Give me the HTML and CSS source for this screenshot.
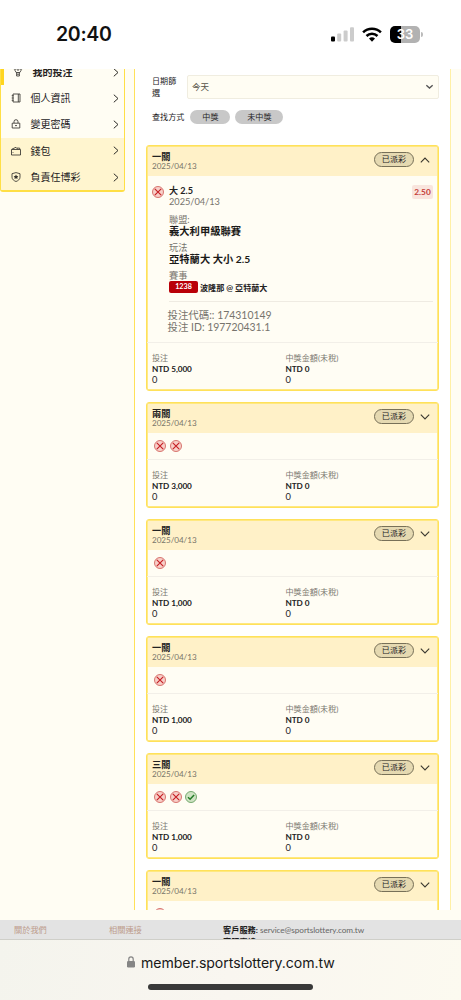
FILE: index.html
```html
<!DOCTYPE html>
<html lang="zh-Hant">
<head>
<meta charset="utf-8">
<meta name="viewport" content="width=device-width">
<title>我的投注</title>
<link rel="stylesheet" href="styles.css">
</head>
<body>
<svg class="defs" width="0" height="0">
  <symbol id="lose" viewBox="0 0 12 12"><circle cx="6" cy="6" r="5.5" fill="#f8cfc8" stroke="#d36862" stroke-width=".9"/><path d="M2.800 2.800l6.400 6.400M9.200 2.800L2.800 9.200" stroke="#c51f24" stroke-width="1.15" fill="none"/></symbol>
  <symbol id="win" viewBox="0 0 12 12"><circle cx="6" cy="6" r="5.5" fill="#cfe3c3" stroke="#69a263" stroke-width=".9"/><path d="M3 6.2l2.1 2 4-4.3" stroke="#237b26" stroke-width="1.5" fill="none"/></symbol>
  <symbol id="down" viewBox="0 0 10 6"><path d="M.8.7L5 5 9.2.7" fill="none" stroke="#3b382f" stroke-width="1.1"/></symbol>
  <symbol id="up" viewBox="0 0 10 6"><path d="M.8 5.3L5 1l4.200 4.300" fill="none" stroke="#3b382f" stroke-width="1.1"/></symbol>
  <symbol id="right" viewBox="0 0 6 9"><path d="M.8.7L5 4.500.8 8.300" fill="none" stroke="#2b2a26" stroke-width="1"/></symbol>
</svg>
<header class="status">
  <span class="clock">20:40</span>
  <svg class="signal" viewBox="0 0 24 15"><rect x="0" y="9.500" width="4" height="5" rx="1"/><g fill="#ccc"><rect x="6.200" y="6.500" width="4" height="8" rx="1"/><rect x="12.600" y="3.500" width="4" height="11" rx="1"/><rect x="19" y="0.300" width="4" height="14.200" rx="1"/></g></svg>
  <svg class="wifi" viewBox="0 0 20 15"><g fill="none" stroke="#000" stroke-width="2.500"><path d="M1.100 5.400a12.600 12.600 0 0 1 17.800 0"/><path d="M4.500 9a7.800 7.800 0 0 1 11 0"/></g><path d="M10 14.700l-3-3.100a4.300 4.300 0 0 1 6 0z"/></svg>
  <div class="battery"><span>33</span></div><i class="cap"></i>
</header>
<div class="page">
  <div class="content">
    <nav class="side">
      <a class="item current"><svg class="ico" viewBox="0 0 10 10"><path d="M2 .5h6v3L6.800 5.500H3.200L2 3.500zM.8 1.800h8.400M3.600 5.500V9h2.800V5.500M4 7.200h2M4 3h2"/></svg><b>我的投注</b><svg class="go"><use href="#right"/></svg></a>
      <a class="item"><svg class="ico" viewBox="0 0 10 10"><path d="M2 1h7v8H2zM7.300 1v8M.7 2.700h2M.7 5h2M.7 7.300h2"/></svg><span>個人資訊</span><svg class="go"><use href="#right"/></svg></a>
      <a class="item"><svg class="ico" viewBox="0 0 10 10"><path d="M1.200 4.200h7.600V9H1.200zM3 4V2.700a2 2 0 0 1 4 0V4M4 6.600h2"/></svg><span>變更密碼</span><svg class="go"><use href="#right"/></svg></a>
      <a class="item tinted"><svg class="ico" viewBox="0 0 10 10"><path d="M.5 3.500h9V9h-9zM.8 3.200L5 1.300 6.600 3.200M6 2.100h2.700v1.200M2 6v.8"/></svg><span>錢包</span><svg class="go"><use href="#right"/></svg></a>
      <a class="item tinted last"><svg class="ico" viewBox="0 0 10 10"><path d="M5 .6L9 1.700v3.500C9 7.400 7 8.800 5 9.500 3 8.800 1 7.400 1 5.200V1.700z"/><path d="M5 2.500l.8 1.500 1.500.2-1 1.200.2 1.600L5 6.300 3.500 7l.2-1.600-1-1.200L4.200 4z" class="solid"/></svg><span>負責任博彩</span><svg class="go"><use href="#right"/></svg></a>
    </nav>
    <main class="panel">
      <div class="filter"><label>日期篩<br>選</label><div class="select"><span>今天</span><svg viewBox="0 0 10 6"><path d="M1.500 1L5 4.200 8.500 1" fill="none" stroke="#555" stroke-width="1.500"/></svg></div></div>
      <div class="modes"><span>查找方式</span><em class="w1">中獎</em><em class="w2">未中獎</em></div>
      <section class="card open">
        <div class="head"><div><h3>一關</h3><time>2025/04/13</time></div><em>已派彩</em><svg class="arrow"><use href="#up"/></svg></div>
        <div class="detail">
          <svg class="mark"><use href="#lose"/></svg>
          <div class="info">
            <div class="pick"><strong>大 2.5</strong><time>2025/04/13</time></div>
            <div class="pair"><span>聯盟:</span><strong>義大利甲級聯賽</strong></div>
            <div class="pair"><span>玩法</span><strong>亞特蘭大 大小 2.5</strong></div>
            <div class="event"><span>賽事</span><div class="match"><b class="code">1238</b><b class="teams">波隆那 @ 亞特蘭大</b></div></div>
            <div class="ids"><span>投注代碼:: 174310149</span><span>投注 ID: 197720431.1</span></div>
          </div>
          <b class="odds">2.50</b>
        </div>
        <div class="sums"><div><small>投注</small><b>NTD 5,000</b><span>0</span></div><div><small>中獎金額(未稅)</small><b>NTD 0</b><span>0</span></div></div>
      </section>
      <section class="card">
        <div class="head"><div><h3>兩關</h3><time>2025/04/13</time></div><em>已派彩</em><svg class="arrow"><use href="#down"/></svg></div>
        <div class="marks"><svg class="mark"><use href="#lose"/></svg><svg class="mark"><use href="#lose"/></svg></div>
        <div class="sums"><div><small>投注</small><b>NTD 3,000</b><span>0</span></div><div><small>中獎金額(未稅)</small><b>NTD 0</b><span>0</span></div></div>
      </section>
      <section class="card">
        <div class="head"><div><h3>一關</h3><time>2025/04/13</time></div><em>已派彩</em><svg class="arrow"><use href="#down"/></svg></div>
        <div class="marks"><svg class="mark"><use href="#lose"/></svg></div>
        <div class="sums"><div><small>投注</small><b>NTD 1,000</b><span>0</span></div><div><small>中獎金額(未稅)</small><b>NTD 0</b><span>0</span></div></div>
      </section>
      <section class="card">
        <div class="head"><div><h3>一關</h3><time>2025/04/13</time></div><em>已派彩</em><svg class="arrow"><use href="#down"/></svg></div>
        <div class="marks"><svg class="mark"><use href="#lose"/></svg></div>
        <div class="sums"><div><small>投注</small><b>NTD 1,000</b><span>0</span></div><div><small>中獎金額(未稅)</small><b>NTD 0</b><span>0</span></div></div>
      </section>
      <section class="card">
        <div class="head"><div><h3>三關</h3><time>2025/04/13</time></div><em>已派彩</em><svg class="arrow"><use href="#down"/></svg></div>
        <div class="marks"><svg class="mark"><use href="#lose"/></svg><svg class="mark"><use href="#lose"/></svg><svg class="mark"><use href="#win"/></svg></div>
        <div class="sums"><div><small>投注</small><b>NTD 1,000</b><span>0</span></div><div><small>中獎金額(未稅)</small><b>NTD 0</b><span>0</span></div></div>
      </section>
      <section class="card">
        <div class="head"><div><h3>一關</h3><time>2025/04/13</time></div><em>已派彩</em><svg class="arrow"><use href="#down"/></svg></div>
        <div class="marks"><svg class="mark"><use href="#lose"/></svg></div>
      </section>
    </main>
  </div>
  <footer class="foot">
    <span class="about">關於我們</span><span class="links">相關連接</span>
    <div class="contact"><div><b>客戶服務:</b> <span>service@sportslottery.com.tw</span></div><div><b>客服專線:</b></div></div>
  </footer>
</div>
<div class="browser">
  <div class="address"><svg viewBox="0 0 8 12"><rect x="0" y="5" width="8" height="6.500" rx="1.200" fill="#858585"/><path d="M1.800 5.500V3a2.200 2.200 0 0 1 4.400 0v2.500" fill="none" stroke="#858585" stroke-width="1.200"/></svg><span>member.sportslottery.com.tw</span></div>
  <div class="home"></div>
</div>
</body>
</html>
```
FILE: styles.css
```css
* { box-sizing: border-box; }
body { margin: 0; width: 461px; height: 1000px; overflow: hidden; background: #fff; color: #24221e; font-family: Lato, "Noto Sans CJK TC", sans-serif; display: flex; flex-direction: column; }
svg { display: block; flex: none; }
.defs { position: absolute; }
em { font-style: normal; }

.status { height: 69px; flex: none; display: flex; align-items: flex-start; padding: 0 0 0 56px; font-family: Inter, sans-serif; }
.clock { width: 275px; padding-top: 22px; font-size: 19.500px; line-height: 25px; font-weight: 600; color: #111; letter-spacing: -.3px; }
.signal { width: 24px; height: 15px; margin-top: 27px; }
.wifi { width: 20px; height: 15px; margin: 27px 0 0 7px; }
.battery { width: 30px; height: 17px; margin: 26px 0 0 8px; border-radius: 5px; background: linear-gradient(90deg, #000 36%, #b2b2b2 36%); color: #fff; font-size: 13px; line-height: 17px; font-weight: 600; text-align: center; }
.cap { width: 1.500px; height: 5px; margin: 32px 0 0 1px; background: #bbb; border-radius: 0 2px 2px 0; }

.page { height: 870px; flex: none; overflow: hidden; background: #fffdf3; }
.content { height: 841px; overflow: hidden; display: flex; align-items: flex-start; }
.side { width: 125px; height: 123px; margin-right: 9px; border: solid #ffdf45; border-width: 0 1.500px 2px 1px; border-radius: 0 0 3px 3px; overflow: hidden; }
.item { height: 26.300px; display: flex; align-items: center; padding: 0 5px 0 10px; font-size: 10px; line-height: 14px; }
.item.current { height: 16px; padding: 0 5px 10px 12px; box-shadow: inset 3px 0 #ffd51f; align-items: flex-end; }
.item.current > * { flex: none; margin-bottom: -4px; }
.item.current .go { margin-bottom: -1.500px; }
.item.tinted { background: #fff5cf; }
.item.last { height: 28px; padding-bottom: 1px; }
.item > span, .item > b { margin: 0 auto 0 9.500px; font-weight: 400; }
.item > b { font-weight: 700; }
.ico { width: 10px; height: 10px; fill: none; stroke: #36342f; stroke-width: .85; }
.item.current .ico { margin-bottom: -2px; }
.ico .solid { fill: #36342f; stroke: none; }
.go { width: 6px; height: 9px; }

.panel { width: 317px; height: 841px; overflow: hidden; padding: 6px 11px 0; background: #fff; border: solid #ffe15a; border-width: 0 1px; border-right-color: #fff0a5; }
.filter { display: flex; height: 24px; }
.filter label { width: 36px; margin-right: 4px; padding-left: 6px; font-size: 8.100px; line-height: 12px; white-space: nowrap; }
.select { flex: 1; margin-left: 1px; height: 24px; border: 1px solid #f0ede0; border-radius: 2px; background: #fffdf3; display: flex; align-items: center; justify-content: space-between; padding: 0 4px 0 4px; font-size: 8.500px; line-height: 22px; color: #555248; }
.select svg { width: 9px; height: 6px; }
.modes { display: flex; align-items: center; height: 15px; margin: 10.500px 0 20.500px; padding-left: 6px; font-size: 8.100px; line-height: 14px; }
.modes em { height: 14px; border-radius: 7px; background: #c8c8c8; text-align: center; margin-left: 5px; }
.modes .w1 { width: 40px; margin-left: 6px; }
.modes .w2 { width: 48px; }

.card { height: 106px; margin-bottom: 11px; border: 1px solid #ffe15a; box-shadow: inset 0 0 0 .7px #ffe15a; border-radius: 3px; background: #fffdf4; overflow: hidden; }
.card.open { height: 246px; margin-bottom: 11px; }
.head { height: 31px; display: flex; align-items: flex-start; padding: 5px 8px 0 5px; background: linear-gradient(#fff1c8, #fff1c8) no-repeat center / calc(100% - 2px) calc(100% - 2px); }
.head > div { flex: 1; }
h3, time, small, strong { display: block; }
h3 { margin: 0; font-size: 9.200px; line-height: 11px; color: #222; }
.head time { font-size: 8.150px; line-height: 9px; color: #777469; letter-spacing: -.05px; }
.head em { width: 40px; height: 15px; margin: 1px -1px 0 0; border: 1px solid #777058; border-radius: 8px; background: #e5d9b1; font-size: 8.100px; line-height: 13px; text-align: center; }
.arrow { width: 10px; height: 6px; margin: 6px 0 0 7px; }
.mark { width: 12px; height: 12px; }
.marks { height: 26px; border-bottom: 1px solid #f2efe8; display: flex; gap: 3.500px; padding: 6px 0 0 7px; }
.sums { display: grid; grid-template-columns: 133.500px 1fr; padding: 8.700px 0 0 5px; }
.sums small { font-size: 8.100px; line-height: 12px; color: #7b7870; }
.sums b { display: block; font-size: 8.200px; line-height: 10.500px; color: #222; letter-spacing: -.06px; }
.sums span { display: block; font-size: 9.300px; line-height: 11px; }

.detail { height: 166px; display: flex; align-items: flex-start; padding: 9px 5px 0 5px; border-bottom: 1px solid #f2efe8; }
.info { flex: 1; padding-left: 5px; white-space: nowrap; }
.pick { height: 29px; margin-top: -1px; }
.pick strong { font-size: 9.100px; line-height: 11px; }
.pick time { font-size: 9.250px; line-height: 11px; color: #77746d; letter-spacing: -.05px; }
.pair { height: 27.500px; }
.pair span, .event > span { display: block; font-size: 9.200px; line-height: 11px; color: #77746d; }
.pair strong { font-size: 10.300px; line-height: 12px; color: #1b1a18; }
.event { height: 33px; padding-top: .500px; border-bottom: 1px solid #efebe2; margin-right: -21px; }
.match { display: flex; align-items: center; height: 12px; margin-top: .500px; font-size: 8.100px; }
.code { width: 29px; height: 12px; border-radius: 2px; background: #b90008; color: #fff; text-align: center; font-size: 7.200px; line-height: 12px; margin-right: 2px; }
.ids { padding-top: 8px; margin-left: -1.500px; font-size: 10.450px; color: #77746d; }
.ids span { display: block; line-height: 11.500px; }
.odds { width: 21px; height: 14px; border-radius: 2px; background: #f9e5dd; color: #c53e38; font-size: 8.300px; line-height: 14px; text-align: center; margin-top: -1px; }

.foot { height: 19px; margin-top: 10px; background: #e3e3e3; display: flex; padding-left: 14px; font-size: 8.200px; line-height: 20px; color: #bd9c8c; overflow: hidden; }
.about { width: 95px; }
.links { width: 114px; }
.contact { color: #1d1d1d; }
.contact div { height: 16px; line-height: 20px; white-space: nowrap; }
.contact div + div { height: 10px; line-height: 12px; }
.contact span { color: #666; letter-spacing: -.08px; }
.browser { flex: 1; background: linear-gradient(100deg, #f4f4ed, #f9f6f0 50%, #fcfaf0); border-top: 1px solid #cfcfc9; font-family: Inter, sans-serif; }
.address { display: flex; align-items: center; height: 24px; margin: 10px 0 0 127px; font-size: 14.100px; color: #181818; }
.address svg { width: 8px; height: 12px; margin-right: 6px; }
.address span { letter-spacing: -.05px; }
.home { width: 165px; height: 6px; margin: 10px 0 0 148px; border-radius: 3px; background: #393939; }
```
